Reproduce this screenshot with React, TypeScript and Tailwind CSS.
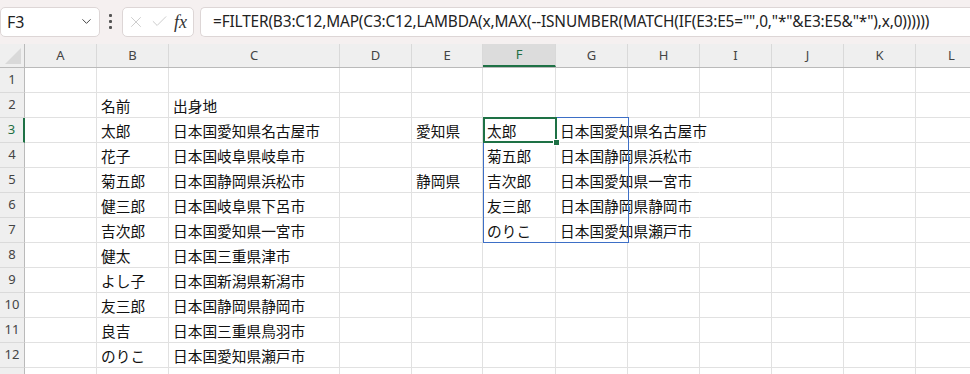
import { Check, ChevronDown, X } from "lucide-react";

const COLS = [
  { key: "A", w: "w-[72px]" },
  { key: "B", w: "w-[72px]" },
  { key: "C", w: "w-[171px]" },
  { key: "D", w: "w-[72px]" },
  { key: "E", w: "w-[71px]" },
  { key: "F", w: "w-[73px]" },
  { key: "G", w: "w-[72px]" },
  { key: "H", w: "w-[72px]" },
  { key: "I", w: "w-[72px]" },
  { key: "J", w: "w-[72px]" },
  { key: "K", w: "w-[72px]" },
  { key: "L", w: "w-[72px]" },
];

type Row = Partial<Record<string, string>>;

const ROWS: Row[] = [
  {},
  { B: "名前", C: "出身地" },
  { B: "太郎", C: "日本国愛知県名古屋市", E: "愛知県", F: "太郎", G: "日本国愛知県名古屋市" },
  { B: "花子", C: "日本国岐阜県岐阜市", F: "菊五郎", G: "日本国静岡県浜松市" },
  { B: "菊五郎", C: "日本国静岡県浜松市", E: "静岡県", F: "吉次郎", G: "日本国愛知県一宮市" },
  { B: "健三郎", C: "日本国岐阜県下呂市", F: "友三郎", G: "日本国静岡県静岡市" },
  { B: "吉次郎", C: "日本国愛知県一宮市", F: "のりこ", G: "日本国愛知県瀬戸市" },
  { B: "健太", C: "日本国三重県津市" },
  { B: "よし子", C: "日本国新潟県新潟市" },
  { B: "友三郎", C: "日本国静岡県静岡市" },
  { B: "良吉", C: "日本国三重県鳥羽市" },
  { B: "のりこ", C: "日本国愛知県瀬戸市" },
  {},
];

const FORMULA =
  '=FILTER(B3:C12,MAP(C3:C12,LAMBDA(x,MAX(--ISNUMBER(MATCH(IF(E3:E5="",0,"*"&E3:E5&"*"),x,0))))))';

function FormulaBar() {
  return (
    <div className="h-[44px] bg-[#f5f0f0] flex items-center pb-[1px]">
      {/* Name box */}
      <div className="w-[100px] shrink-0 h-[30px] bg-white border border-[#ddd6d6] rounded-[5px] flex items-center justify-between pl-[6px] pr-[5px]">
        <span className="text-[16px] text-[#222] font-['Noto_Sans',sans-serif]">F3</span>
        <ChevronDown size={15} strokeWidth={1.6} className="text-[#444]" />
      </div>
      <div className="w-[20px] shrink-0 flex flex-col items-center gap-[3px]">
        <div className="w-[3px] h-[3px] bg-[#555] rounded-[1px]" />
        <div className="w-[3px] h-[3px] bg-[#555] rounded-[1px]" />
        <div className="w-[3px] h-[3px] bg-[#555] rounded-[1px]" />
      </div>
      {/* Cancel / confirm / fx */}
      <div className="ml-[2px] w-[72px] shrink-0 h-[30px] bg-white border border-[#ddd6d6] rounded-[5px] flex items-center pl-[4px] gap-[5px]">
        <X size={18} strokeWidth={1.1} className="text-[#c4c4c4]" />
        <Check size={19} strokeWidth={1.1} className="text-[#c4c4c4]" />
        <span className="text-[18px] italic text-[#333] font-['Liberation_Serif',serif] leading-none">fx</span>
      </div>
      {/* Formula */}
      <div className="ml-[6px] flex-1 h-[30px] bg-white border border-[#ddd6d6] rounded-l-[5px] border-r-0 flex items-center pl-[12px] overflow-hidden">
        <span className="text-[15.4px] text-[#222] whitespace-nowrap font-['Noto_Sans',sans-serif] tracking-[-0.15px]">
          {FORMULA}
        </span>
      </div>
    </div>
  );
}

function ColumnHeader() {
  return (
    <div className="flex h-[24px] bg-[#efefef] border-b border-[#bababa]">
      <div className="w-[25px] shrink-0 border-r border-[#bababa] flex items-end justify-end pr-[3px] pb-[3px]">
        <svg width="16" height="16" viewBox="0 0 16 16">
          <polygon points="16,0 16,16 0,16" fill="#d9d9d9" />
        </svg>
      </div>
      {COLS.map((c) => {
        const active = c.key === "F";
        return (
          <div
            key={c.key}
            className={`${c.w} shrink-0 border-r border-[#d9d9d9] flex items-center justify-center text-[13px] font-['Noto_Sans',sans-serif] ${
              active ? "bg-[#dcdcdc] text-[#1e6e42] border-b-2 border-b-[#1e7145]" : "text-[#444]"
            }`}
          >
            {c.key}
          </div>
        );
      })}
    </div>
  );
}

function Sheet() {
  return (
    <div className="relative">
      {ROWS.map((row, i) => {
        const n = i + 1;
        const spill = n >= 3 && n <= 7;
        return (
          <div key={n} className="flex h-[25px]">
            <div
              className={`w-[25px] shrink-0 bg-[#efefef] border-b border-[#dadada] flex items-center justify-center text-[13px] font-['Noto_Sans',sans-serif] ${
                n === 3
                  ? "border-r-2 border-r-[#1e7145] text-[#1e6e42]"
                  : "border-r border-r-[#bababa] text-[#444]"
              }`}
            >
              {n <= 12 ? n : ""}
            </div>
            {COLS.map((c) => {
              const hideRight = spill && (c.key === "G" || c.key === "H");
              return (
                <div
                  key={c.key}
                  className={`${c.w} shrink-0 border-b border-r border-[#e1e1e1] ${
                    hideRight ? "border-r-transparent" : ""
                  } flex items-center pl-[4px] pt-[2px] whitespace-nowrap`}
                >
                  {row[c.key] && (
                    <span className="relative z-10 text-[14.7px] text-[#111] font-['Noto_Sans_CJK_JP',sans-serif] leading-none">
                      {row[c.key]}
                    </span>
                  )}
                </div>
              );
            })}
          </div>
        );
      })}

      {/* Spill range outline F3:G7 */}
      <div className="absolute left-[483px] top-[49px] w-[146px] h-[126px] border border-[#3d6fc6] z-20 pointer-events-none" />
      {/* Active cell F3 */}
      <div className="absolute left-[483px] top-[49px] w-[74px] h-[26px] border-2 border-[#1e7145] z-30 pointer-events-none" />
      <div className="absolute left-[553px] top-[71px] w-[7px] h-[7px] bg-[#1e7145] border border-white z-40" />
    </div>
  );
}

export default function App() {
  return (
    <div className="w-[970px] h-[374px] overflow-hidden bg-white">
      <FormulaBar />
      <ColumnHeader />
      <Sheet />
    </div>
  );
}
